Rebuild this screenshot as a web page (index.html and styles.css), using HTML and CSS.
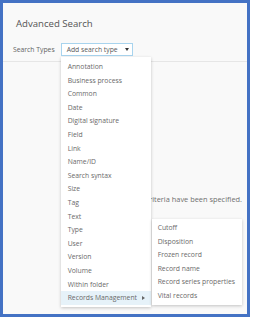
FILE: index.html
```html
<!DOCTYPE html>
<html lang="en">
<head>
    <meta charset="UTF-8">
    <meta name="viewport" content="width=device-width, initial-scale=1.0">
    <title>Advanced Search</title>
    <link rel="stylesheet" href="styles.css">
</head>
<body>
    <div class="panel">
        <!-- Cabeçalho com título e tipos de busca -->
        <div class="header">
            <div class="title">Advanced Search</div>
            <div class="search-row">
                <span class="label">Search Types</span>
                <div class="dropdown">
                    <div class="select">
                        <span>Add search type</span>
                        <span class="caret"></span>
                    </div>
                    <ul class="menu">
                        <li>Annotation</li>
                        <li>Business process</li>
                        <li>Common</li>
                        <li>Date</li>
                        <li>Digital signature</li>
                        <li>Field</li>
                        <li>Link</li>
                        <li>Name/ID</li>
                        <li>Search syntax</li>
                        <li>Size</li>
                        <li>Tag</li>
                        <li>Text</li>
                        <li>Type</li>
                        <li>User</li>
                        <li>Version</li>
                        <li>Volume</li>
                        <li>Within folder</li>
                        <li class="active">
                            <span>Records Management</span>
                            <span class="arrow"></span>
                            <ul class="submenu">
                                <li>Cutoff</li>
                                <li>Disposition</li>
                                <li>Frozen record</li>
                                <li>Record name</li>
                                <li>Record series properties</li>
                                <li>Vital records</li>
                            </ul>
                        </li>
                    </ul>
                </div>
            </div>
        </div>
        <!-- Área de resultados -->
        <div class="results">
            <p class="message">No search criteria have been specified.</p>
        </div>
    </div>
</body>
</html>
```

FILE: styles.css
```css
body {
    margin: 0;
    background: #fff;
    font-family: "Open Sans", "DejaVu Sans", sans-serif;
    color: #646464;
}
.panel {
    box-sizing: border-box;
    width: 250px;
    height: 317px;
    border: 3px solid #4472c4;
    background: #f9f9f9;
}
.header {
    padding: 15px 0 5px 0;
    border-bottom: 1px solid #e6e6e6;
}
.title {
    padding-left: 13px;
    font-size: 9.6px;
    line-height: 12px;
    color: #555;
}
.search-row {
    display: flex;
    align-items: center;
    gap: 6px;
    margin-top: 13px;
    padding-left: 10px;
}
.label {
    font-size: 6.8px;
    line-height: 13px;
}
.dropdown {
    position: relative;
}
.select {
    box-sizing: border-box;
    display: flex;
    align-items: center;
    justify-content: space-between;
    width: 72px;
    height: 13px;
    padding: 0 3px 0 5px;
    background: #fff;
    border: 1px solid #a8d4ee;
    font-size: 6.8px;
    color: #5a5a5a;
}
.caret {
    width: 0;
    height: 0;
    border-left: 2px solid transparent;
    border-right: 2px solid transparent;
    border-top: 3px solid #333;
}
.menu, .submenu {
    list-style: none;
    margin: 0;
    background: #fff;
    box-shadow: 0 1px 3px rgba(0, 0, 0, 0.22);
    font-size: 6.8px;
    color: #6a6a6a;
}
.menu {
    position: absolute;
    top: 14px;
    left: 0;
    width: 90px;
    padding: 3px 0 2px 0;
}
.menu li {
    position: relative;
    height: 13.6px;
    line-height: 13.6px;
    padding-left: 7px;
    white-space: nowrap;
}
.menu li.active {
    background: #e6f2f9;
}
.arrow {
    position: absolute;
    top: 5px;
    left: 81px;
    width: 0;
    height: 0;
    border-top: 2px solid transparent;
    border-bottom: 2px solid transparent;
    border-left: 3px solid #666;
}
.submenu {
    position: absolute;
    top: -72px;
    left: 91px;
    width: 90px;
    padding: 2px 0 2px 0;
}
.submenu li {
    padding-left: 6px;
}
.results {
    padding: 132px 5px 0 0;
    text-align: right;
}
.message {
    margin: 0;
    font-size: 7.4px;
    line-height: 10px;
    color: #707070;
}
```
